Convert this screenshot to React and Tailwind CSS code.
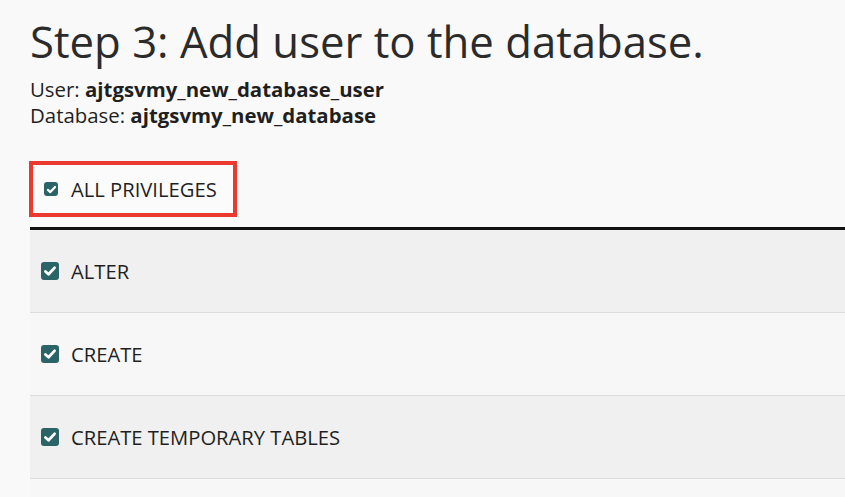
import React from 'react';

const privileges = ['ALTER', 'CREATE', 'CREATE TEMPORARY TABLES'];

const CheckBox = ({ size = 'lg' }) => (
  <span
    className={
      size === 'lg'
        ? 'flex h-[18px] w-[18px] shrink-0 items-center justify-center rounded-[3px] bg-[#2b6466]'
        : 'flex h-[14px] w-[14px] shrink-0 items-center justify-center rounded-[3px] bg-[#2b6466]'
    }
  >
    <svg viewBox="0 0 16 16" className={size === 'lg' ? 'h-[14px] w-[14px]' : 'h-[11px] w-[11px]'}>
      <path d="M2.8 8.6 L6.3 11.8 L13.2 4.4" fill="none" stroke="#fff" strokeWidth="3.2" strokeLinecap="round" strokeLinejoin="round" />
    </svg>
  </span>
);

const App = () => {
  return (
    <div className="min-h-screen overflow-hidden bg-[#f9f9f9] pl-[30px] font-['Open_Sans',sans-serif] text-[#1f1f1f]">
      <h1 className="pt-[11px] text-[43.7px] leading-[60px] font-normal text-[#2b2b2b]">
        Step 3: Add user to the database.
      </h1>

      <div className="mt-[5px] text-[20.4px] leading-[26px]">
        <p>
          User: <span className="font-bold">ajtgsvmy_new_database_user</span>
        </p>
        <p>
          Database: <span className="font-bold">ajtgsvmy_new_database</span>
        </p>
      </div>

      {/* highlighted select-all toggle */}
      <div className="mt-[33px] -ml-px flex h-[56px] w-[208px] items-center gap-[13px] border-4 border-[#ea3a30] bg-[#fbfbfb] pl-[11px]">
        <CheckBox size="sm" />
        <span className="text-[20.2px] text-[#1f1f1f]">ALL PRIVILEGES</span>
      </div>

      <div className="mt-[10px] w-[900px] border-t-[3px] border-[#111]">
        {privileges.map((name, i) => (
          <div
            key={name}
            className={`flex h-[83px] items-center gap-[12px] border-b border-[#dcdcdc] pl-[11px] ${
              i % 2 === 0 ? 'bg-[#f0f0f0]' : 'bg-[#f7f7f7]'
            }`}
          >
            <CheckBox />
            <span className="text-[20.2px] text-[#1f1f1f]">{name}</span>
          </div>
        ))}
        <div className="h-[83px] bg-[#f7f7f7]" />
      </div>
    </div>
  );
};

export default App;
